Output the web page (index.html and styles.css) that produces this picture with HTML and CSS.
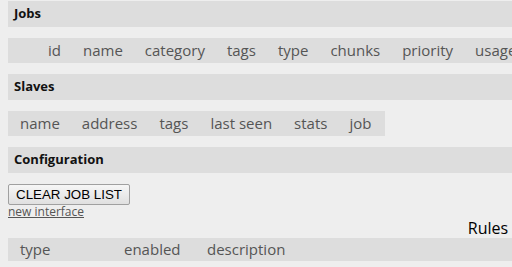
FILE: index.html
```
<!DOCTYPE html>
<html lang="en">
<head>
  <meta charset="UTF-8" />
  <meta name="viewport" content="width=device-width, initial-scale=1.0" />
  <title>Farm Status</title>
  <link rel="stylesheet" href="styles.css">
</head>
<body>
  <h2>Jobs</h2>
  <table class="grid jobs">
    <thead>
      <tr>
        <th class="sel"></th>
        <th>id</th>
        <th>name</th>
        <th>category</th>
        <th>tags</th>
        <th>type</th>
        <th>chunks</th>
        <th>priority</th>
        <th>usage</th>
        <th>progress</th>
        <th>status</th>
      </tr>
    </thead>
    <tbody id="jobList"></tbody>
  </table>

  <h2>Slaves</h2>
  <table class="grid slaves">
    <thead>
      <tr>
        <th>name</th>
        <th>address</th>
        <th>tags</th>
        <th>last seen</th>
        <th>stats</th>
        <th>job</th>
      </tr>
    </thead>
    <tbody id="slaveList"></tbody>
  </table>

  <h2>Configuration</h2>
  <button onclick="clearJobs()">CLEAR JOB LIST</button>
  <a class="alt" href="#">new interface</a>

  <table class="grid rules">
    <caption>Rules</caption>
    <thead>
      <tr>
        <th class="col-type">type</th>
        <th class="col-enabled">enabled</th>
        <th>description</th>
      </tr>
    </thead>
    <tbody id="ruleList"></tbody>
  </table>

  <script>
    function clearJobs() {
      document.getElementById('jobList').innerHTML = '';
    }
  </script>
</body>
</html>
```

FILE: styles.css
```
html { overflow: hidden; }
body { margin: 1px 0 0 8px; background: #eee; font-family: "Open Sans", sans-serif; color: #000; }
h2 { margin: 0 0 11px; padding: 0 6px 2px; height: 24px; line-height: 24px; background: #ddd; font-size: 13px; font-weight: bold; color: #111; width: 948px; }
.grid { border-collapse: collapse; margin-bottom: 11px; }
.grid th { background: #ddd; color: #555; font-size: 15px; font-weight: normal; text-align: left; padding: 0 11px; line-height: 25px; white-space: nowrap; }
.grid th:first-child { padding-left: 12px; }
.jobs th.sel { padding: 0 11px 0 18px; }
.slaves th:last-child { padding-right: 14px; }
button { display: block; margin: 0; padding: 0 7px; height: 21px; font-family: "Liberation Sans", Arial, sans-serif; font-size: 13.333px; color: #000; background: linear-gradient(#f6f6f6, #e0e0e0); border: 1px solid #a0a0a0; border-radius: 2px; }
a.alt { display: block; font-size: 12px; line-height: 14px; color: #555; }
.rules { width: 960px; margin-bottom: 0; }
.rules caption { font-size: 16px; line-height: 19px; color: #000; }
.rules th { line-height: 23px; }
.rules th.col-type { width: 82px; }
.rules th.col-enabled { width: 61px; }
```
